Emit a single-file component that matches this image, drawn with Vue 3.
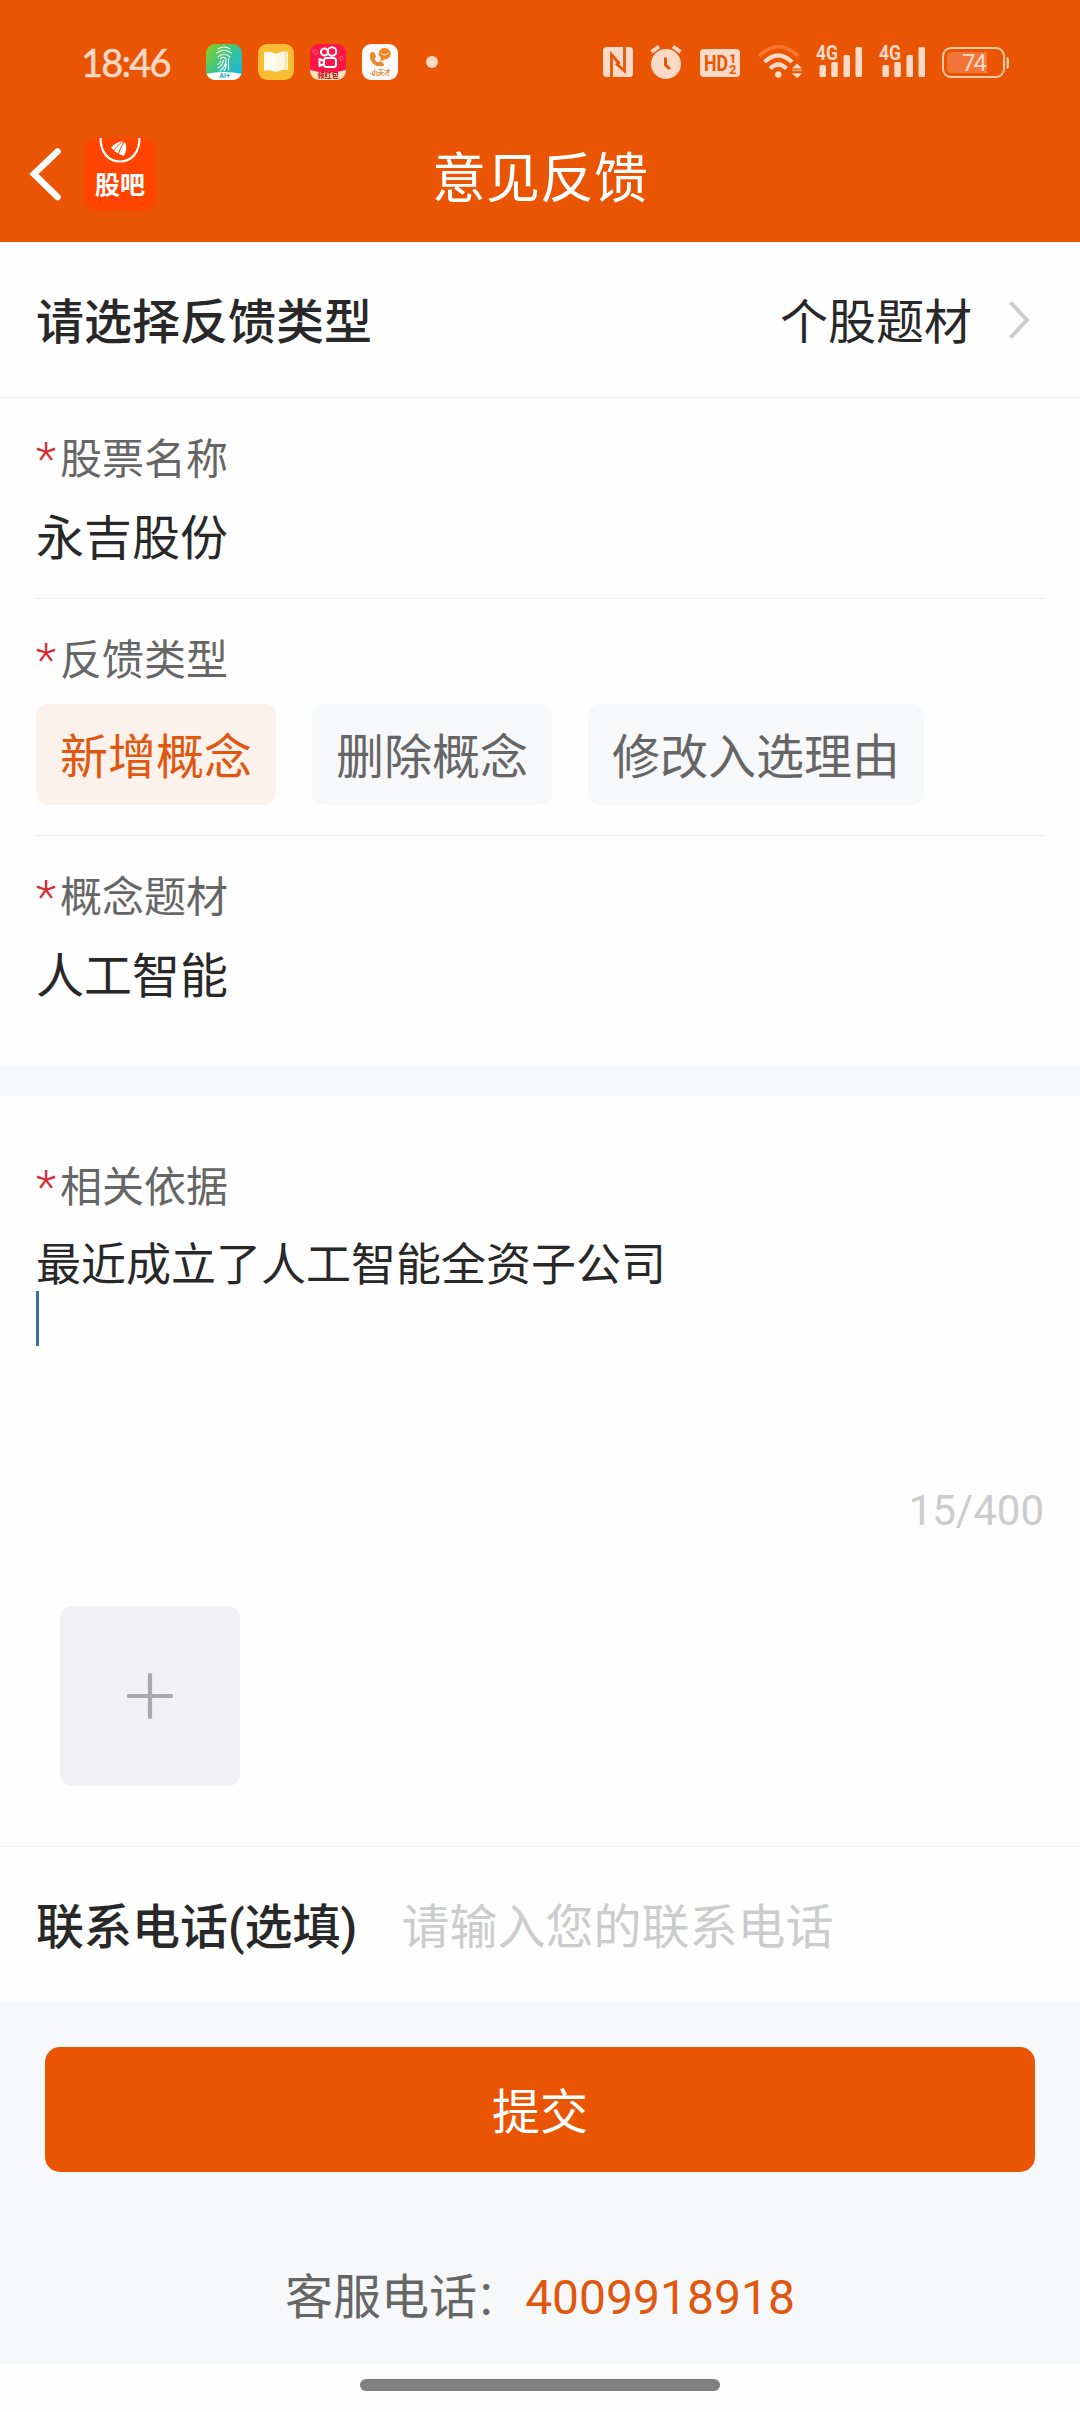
<script setup>
import { ref } from 'vue'

const types = ['新增概念', '删除概念', '修改入选理由']
const activeType = ref(0)
const evidence = '最近成立了人工智能全资子公司'
const signals = [0, 1]
</script>

<template>
  <div class="page" lang="zh-CN">
    <header class="header">
      <div class="status">
        <span class="time">18:46</span>
        <div class="apps">
          <svg width="36" height="36" viewBox="0 0 36 36">
            <defs>
              <linearGradient id="ga" x1="0" y1="0" x2="1" y2="0.9">
                <stop offset="0" stop-color="#8fd016" />
                <stop offset="0.5" stop-color="#3cc38e" />
                <stop offset="1" stop-color="#12b4ea" />
              </linearGradient>
              <clipPath id="ca"><rect width="36" height="36" rx="9" /></clipPath>
            </defs>
            <g clip-path="url(#ca)">
              <rect width="36" height="36" fill="url(#ga)" />
              <path d="M0 30Q18 26 36 30V36H0Z" fill="#fff" />
              <g fill="none" stroke="#fff" stroke-width="1.1" stroke-linecap="round">
                <path d="M12 5Q18 1 24 5M10.500 9Q18 3.500 25.500 9M12 13Q18 7.500 24 13M14.500 14.500Q18 12 20 15Q20.500 22 14 27M17.500 16Q17 21 12 24M15 16.500Q14.500 19 11.500 20.500M22.500 14V26M20.500 20Q20 24 18 27" />
              </g>
              <text x="18.500" y="34.300" text-anchor="middle" font-size="7" font-weight="700" fill="#22a8b8">AI+</text>
            </g>
          </svg>
          <svg width="36" height="36" viewBox="0 0 36 36">
            <rect width="36" height="36" rx="9" fill="#f8bd33" />
            <path d="M6 8Q13 7 18 10V28Q13 25.500 6 26.500Z" fill="#fffbee" />
            <path d="M18 10Q23 7 28.500 7V25Q23 25.500 18 28Z" fill="#f8ebc9" />
            <path d="M18 10L26 7.500V25.500L18 28Z" fill="#fff7e0" />
            <path d="M28.500 8.500H30V26H24L28.500 25Z" fill="#fff3d0" />
          </svg>
          <svg width="36" height="36" viewBox="0 0 36 36">
            <defs><clipPath id="cb"><rect width="36" height="36" rx="9" /></clipPath></defs>
            <g clip-path="url(#cb)">
              <rect width="36" height="36" fill="#fb1747" />
              <path d="M0 26Q18 31 36 26V36H0Z" fill="#fde6bf" />
              <g fill="none" stroke="#fff" stroke-width="2">
                <circle cx="14.500" cy="8" r="3.500" />
                <circle cx="22" cy="7.500" r="4.300" />
                <rect x="14" y="14" width="12" height="9" rx="2.500" />
                <path d="M14 17L9.500 15V22L14 20" stroke-linejoin="round" />
              </g>
              <path d="M2.500 7L5 5.500L8 8L6 11Z M29 14L32 12L33 15L31 17Z" fill="none" stroke="#ff7b8f" stroke-width="0.700" />
              <text x="18" y="34.300" text-anchor="middle" font-size="7.200" font-weight="900" fill="#c2182a">领红包</text>
            </g>
          </svg>
          <svg width="36" height="36" viewBox="0 0 36 36">
            <rect width="36" height="36" rx="9" fill="#fdfbfa" />
            <path d="M8.500 9Q10.500 7 12.500 9L14 12Q14.300 13.500 12.500 14.500Q13 17.500 16 18.500Q17.500 17 19 17.800L21.500 19.500Q23 21 20.500 22Q14.500 23.500 10 18.500Q6.500 13 8.500 9Z" fill="#e9892b" />
            <path d="M22.500 4a6 5.500 0 1 1 0 11.500q-3 1.500-5 1.500q1.800-1.500 1.200-3.500a6 5.500 0 0 1 3.800-9.500Z" fill="#f08518" />
            <path d="M18.500 9Q22.500 13 27 8.500" stroke="#fff" stroke-width="1" fill="none" />
            <text x="19" y="30.500" text-anchor="middle" font-size="6.300" font-weight="700" fill="#e2862e">小天才</text>
            <path d="M8 29Q9 31 12 30.500M14 31.500L17 31" stroke="#e2862e" fill="none" stroke-width="0.900" />
          </svg>
          <i class="dot"></i>
        </div>
        <div class="system">
          <svg class="nfc" width="30" height="40" viewBox="604 42 30 40">
            <rect x="604" y="47" width="30" height="30" rx="3.500" fill="#fdd9c8" />
            <path d="M612.500 77V54.500L620.500 64M625.500 47V71L617 63.500" fill="none" stroke="#ea5504" stroke-width="2.800" />
          </svg>
          <svg class="alarm" width="34" height="40" viewBox="650 42 34 40">
            <circle cx="667" cy="64" r="15" fill="#fdd9c8" />
            <path d="M652.500 52L660 46.500M681.500 52L674 46.500" stroke="#fdd9c8" stroke-width="4" />
            <path d="M666.500 57.500V65L671 69" stroke="#ea5504" stroke-width="3" fill="none" />
          </svg>
          <svg class="hd" width="40" height="40" viewBox="701 42 40 40">
            <rect x="701" y="49" width="40" height="28" rx="4" fill="#fdd9c8" />
            <g fill="#ea5504" font-weight="700">
              <text x="705" y="71" font-size="22" textLength="24" lengthAdjust="spacingAndGlyphs">HD</text>
              <text x="730" y="62.500" font-size="13">1</text>
              <text x="730" y="74" font-size="13">2</text>
            </g>
          </svg>
          <svg class="wifi" width="45" height="40" viewBox="759 42 45 40">
            <g fill="none" stroke="#fdd9c8" stroke-width="4.200">
              <path d="M760 56Q779.300 37.500 799 56" stroke="#f5782f" stroke-width="3.500" />
              <path d="M765.500 62Q779.300 49 793 62" />
              <path d="M771 68.500Q779.300 60.500 787.500 68.500" />
            </g>
            <g fill="#fdd9c8">
              <circle cx="779.300" cy="74.500" r="3.200" />
              <path d="M793 68.500H803L798 63.500ZM793 73.300H803L798 78.300Z" />
              <rect x="793" y="69.700" width="10" height="1.500" fill="#f9a67c" />
            </g>
          </svg>
          <svg v-for="s in signals" :key="s" class="signal" width="47" height="40" viewBox="817 42 47 40">
            <g fill="#fdd9c8">
              <text x="817" y="60" font-size="21" font-weight="700" textLength="22" lengthAdjust="spacingAndGlyphs">4G</text>
              <rect x="820.500" y="65" width="6.500" height="12" rx="1.500" />
              <rect x="832.300" y="62" width="6.500" height="15" rx="1.500" />
              <rect x="844.500" y="55" width="6.500" height="22" rx="1.500" />
              <rect x="856.500" y="47" width="6.500" height="30" rx="1.500" />
            </g>
          </svg>
          <svg class="battery" width="67" height="40" viewBox="942 42 67 40">
            <rect x="943" y="48" width="61" height="29" rx="8" fill="none" stroke="#fec9a4" stroke-width="2" />
            <path d="M951 52H987V73H951Q947 73 947 69V56Q947 52 951 52Z" fill="#f07536" />
            <path d="M1006.500 57Q1009 57 1009 60V66Q1009 69 1006.500 69Z" fill="#fec9a4" />
            <text x="962" y="71" font-size="24" font-weight="400" fill="#fdd9c8" textLength="25">74</text>
          </svg>
        </div>
      </div>
      <nav class="nav">
        <svg class="back" width="34" height="58" viewBox="0 0 34 58">
          <path d="M29.500 6.500L6 29L29.500 52" fill="none" stroke="#fff" stroke-width="6.500" stroke-linecap="round" />
        </svg>
        <div class="logo">
          <svg width="72" height="32" viewBox="0 0 72 32">
            <path d="M16.500 0C16.500 14 24 23.500 36 23.500S55.500 14 55.500 0" fill="none" stroke="#fff" stroke-width="2.200" />
            <g fill="#fff">
              <path d="M27 9.500Q32 4 39 3Q33 7 29.500 12Z" />
              <path d="M30 13Q34 6.500 40 3.500Q36 9 34 15.500Z" />
              <path d="M35 16Q37 8.500 41 4Q44 10 40 18Z" />
            </g>
          </svg>
          <span>股吧</span>
        </div>
        <h1>意见反馈</h1>
      </nav>
    </header>

    <section class="picker">
      <strong>请选择反馈类型</strong>
      <span class="picked">个股题材</span>
      <svg width="24" height="40" viewBox="0 0 24 40">
        <path d="M2.500 2.500L19 20L2.500 37.500" fill="none" stroke="#ccc" stroke-width="4" />
      </svg>
    </section>

    <section class="card">
      <div class="field stock">
        <label><i>*</i>股票名称</label>
        <p>永吉股份</p>
      </div>
      <div class="field kind">
        <label><i>*</i>反馈类型</label>
        <div class="tags">
          <button v-for="(t, i) in types" :key="t" :class="{ active: i === activeType }" @click="activeType = i">{{ t }}</button>
        </div>
      </div>
      <div class="field concept">
        <label><i>*</i>概念题材</label>
        <p>人工智能</p>
      </div>
    </section>

    <section class="evidence">
      <label><i>*</i>相关依据</label>
      <p class="content">{{ evidence }}</p>
      <div class="caret"></div>
      <div class="count">15/400</div>
      <div class="upload">
        <svg width="46" height="46" viewBox="0 0 46 46">
          <path d="M2 23H44M23 2V44" stroke="#a9a9a9" stroke-width="4.200" stroke-linecap="round" />
        </svg>
      </div>
    </section>

    <section class="contact">
      <strong>联系电话(选填)</strong>
      <span>请输入您的联系电话</span>
    </section>

    <footer class="footer">
      <button class="submit">提交</button>
      <div class="service">客服电话<span class="colon">：</span><a>4009918918</a></div>
    </footer>
    <div class="gesture"><i></i></div>
  </div>
</template>

<style>
body { margin: 0; background: #fefefe; }
</style>

<style scoped>
* { box-sizing: border-box; }
.page {
  width: 1080px;
  height: 2412px;
  overflow: hidden;
  background: #fefefe;
  color: #282828;
  font: 400 48px/60px Roboto, "Noto Sans CJK SC", sans-serif;
}
svg { display: block; flex: none; }
i { font-style: normal; }
p, h1 { margin: 0; font-weight: 400; font-size: inherit; }
strong { font-weight: 500; }
button { border: 0; padding: 0; font: inherit; }

.header { height: 242px; background: #ea5504; }
.status {
  display: flex;
  align-items: center;
  height: 112px;
  padding: 12px 71px 0 81px;
}
.time {
  width: 125px;
  color: #fdd9c8;
  font-family: Lato, sans-serif;
  font-size: 38px;
  letter-spacing: -1.8px;
  -webkit-text-stroke: 0.5px #fdd9c8;
}
.apps { display: flex; align-items: center; gap: 16px; }
.dot { width: 12px; height: 12px; margin-left: 12px; border-radius: 50%; background: #fdd9c8; }
.system { display: flex; align-items: center; margin-left: auto; gap: 16px; }
.hd { margin-left: 1px; }
.wifi { margin-left: 2px; }
.wifi + .signal { margin-left: -3px; }

.nav { position: relative; display: flex; align-items: center; height: 130px; padding-left: 28px; }
.back { margin-top: -6px; }
.logo {
  width: 72px;
  height: 72px;
  margin: -6px 0 0 22px;
  border-radius: 14px;
  background: #ff4400;
  color: #fff;
  text-align: center;
}
.logo span { display: block; font-size: 25px; line-height: 31px; font-weight: 700; }
.nav h1 {
  position: absolute;
  inset: 0;
  color: #fff;
  font-size: 54px;
  line-height: 136px;
  text-align: center;
}

.picker {
  display: flex;
  align-items: center;
  height: 156px;
  padding: 0 48px 0 36px;
  border-bottom: 1px solid #ebebeb;
}
.picker strong, .picked { padding-top: 7px; }
.picked { margin: 0 36px 0 auto; }

.card { padding: 0 36px; }
.field { border-bottom: 1px solid #ebebeb; }
label { display: flex; color: #666; font-size: 42px; line-height: 60px; }
label i { width: 24px; color: #d92b2f; font-weight: 300; font-size: 47px; line-height: 58px; }
.stock { height: 201px; padding-top: 32px; }
.stock p, .concept p { margin-top: 19px; }
.kind { height: 237px; padding-top: 32px; }
.tags { display: flex; gap: 36px; margin-top: 13px; }
.tags button {
  height: 101px;
  padding: 6px 24px 0;
  border-radius: 12px;
  background: #f7f8fa;
  color: #666;
}
.tags .active { background: #fdf1eb; color: #e0570f; }
.concept { height: 230px; padding-top: 32px; border-bottom: 0; }

.evidence {
  display: flex;
  flex-direction: column;
  height: 781px;
  padding: 62px 36px 0;
  border-top: 30px solid #f7f8fa;
  border-bottom: 1px solid #ebebeb;
}
.content { margin-top: 18px; font-size: 45px; }
.caret { width: 3px; height: 55px; margin-top: -5px; background: #3b6ea8; }
.count { margin-top: 135px; align-self: flex-end; color: #ccc; font-size: 42px; }
.upload {
  display: grid;
  place-items: center;
  width: 180px;
  height: 180px;
  margin: 65px 0 0 24px;
  border-radius: 12px;
  background: #f1f1f4;
}

.contact { display: flex; align-items: center; height: 155px; padding: 6px 36px 0; }
.contact span { margin-left: 44px; color: #ccc; }

.footer { height: 362px; padding: 45px 45px 0; background: #f7f8fa; }
.submit {
  display: block;
  width: 100%;
  height: 125px;
  padding-top: 7px;
  border-radius: 15px;
  background: #ea5504;
  color: #fff;
}
.service { display: flex; justify-content: center; margin-top: 96px; color: #666; }
.colon { width: 51px; margin-left: -3px; font-weight: 300; }
.service a { color: #e0570f; }

.gesture { display: flex; justify-content: center; padding-top: 15px; }
.gesture i { width: 360px; height: 12px; border-radius: 6px; background: #808080; }
</style>
